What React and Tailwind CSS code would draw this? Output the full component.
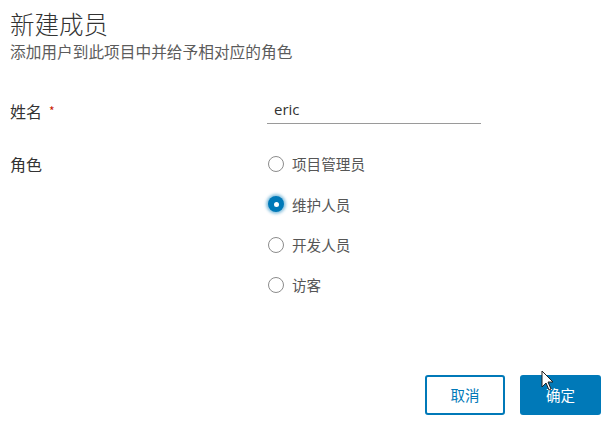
import React, { useState } from 'react';

const roles = ['项目管理员', '维护人员', '开发人员', '访客'];

const Radio = ({ label, checked, onChange }) => (
  <label className="flex items-center h-[40.3px] cursor-pointer">
    {checked ? (
      <span className="w-[16px] h-[16px] rounded-full bg-[#0079b8] flex items-center justify-center shadow-[0_0_3px_2px_rgba(0,121,184,0.45)]">
        <span className="w-[5px] h-[5px] rounded-full bg-white" />
      </span>
    ) : (
      <span className="w-[16px] h-[16px] rounded-full border border-[#8c8c8c] bg-white" />
    )}
    <input type="radio" className="hidden" checked={checked} onChange={onChange} />
    <span className="ml-[8px] text-[14.6px] text-[#565656]">{label}</span>
  </label>
);

export default function App() {
  const [role, setRole] = useState('维护人员'); // 默认选中
  const [name, setName] = useState('eric');

  return (
    <div className="relative w-[608px] h-[427px] bg-white overflow-hidden font-['Noto_Sans_CJK_SC','Noto_Sans',sans-serif]">
      <div className="pl-[10px] pt-[6px]">
        <h1 className="text-[24.5px] leading-[36px] font-light text-[#333]">新建成员</h1>
        <p className="text-[15.7px] leading-[20px] text-[#5c5c5c]">添加用户到此项目中并给予相对应的角色</p>
      </div>

      <div className="grid grid-cols-[257px_1fr] pl-[10px] mt-[34px]">
        <div className="flex items-center h-[30px] text-[16px] text-[#333]">
          姓名<span className="ml-[7px] text-[#c92100] text-[12px]">*</span>
        </div>
        <div className="h-[30px] flex items-start">
          <input
            value={name}
            onChange={(e) => setName(e.target.value)}
            className="w-[214px] h-[28px] pl-[7px] pb-[1px] text-[15px] text-[#333] border-b border-[#9a9a9a] outline-none font-['Open_Sans',sans-serif]"
          />
        </div>

        <div className="mt-[18px] h-[40px] flex items-center text-[16px] text-[#333]">角色</div>
        <div className="mt-[18px] pl-[1px]">
          {roles.map((r) => (
            <Radio key={r} label={r} checked={role === r} onChange={() => setRole(r)} />
          ))}
        </div>
      </div>

      <div className="absolute right-[7px] bottom-[12px] flex gap-[15px]">
        <button className="w-[80px] h-[40px] rounded-[3px] border-2 border-[#0079b8] text-[#0079b8] text-[14.5px] bg-white">
          取消
        </button>
        <button className="w-[81px] h-[40px] rounded-[3px] bg-[#0079b8] text-white text-[14.5px]">
          确定
        </button>
      </div>

      <svg className="absolute left-[541px] top-[370px]" width="14" height="22" viewBox="0 0 14 22">
        <path d="M1 1 L1 17 L5 13 L8 20 L10 19 L7 12 L12 12 Z" fill="white" stroke="#222" strokeWidth="1" />
      </svg>
    </div>
  );
}
